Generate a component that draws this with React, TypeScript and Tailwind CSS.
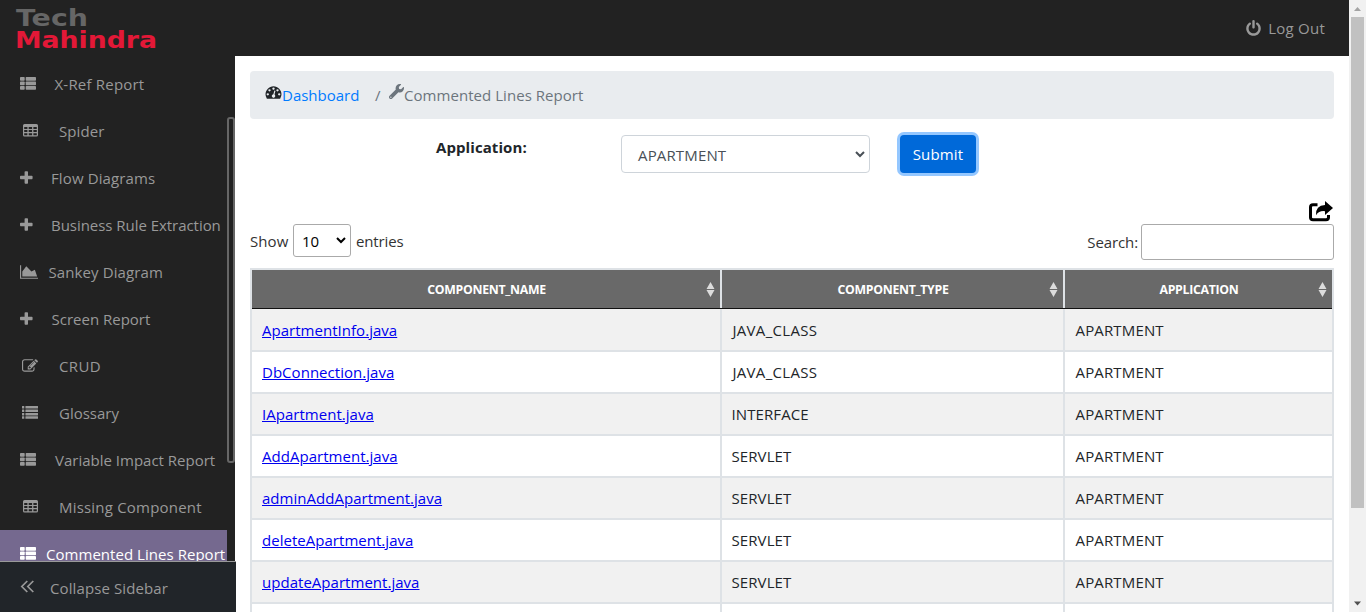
import type { ReactNode } from 'react';
import { FaWrench } from 'react-icons/fa';

type IconName = 'thlist' | 'table' | 'plus' | 'area' | 'edit' | 'list';

const svgProps = { fill: 'currentColor', height: 16, className: 'block shrink-0' };

function Icon({ name }: { name: IconName }) {
  switch (name) {
    case 'thlist':
      return (
        <svg {...svgProps} width={16} viewBox="0 0 16 16">
          {[1, 5.5, 10].map((y) => (
            <g key={y}>
              <rect x="0" y={y} width="4.700" height="3.800" rx="0.700" />
              <rect x="5.700" y={y} width="10.300" height="3.800" rx="0.700" />
            </g>
          ))}
        </svg>
      );
    case 'table':
      return (
        <svg {...svgProps} width={15} viewBox="0 0 15 16">
          <path
            fillRule="evenodd"
            d="M1.500 1h12q1.500 0 1.500 1.500v9.500q0 1.500-1.500 1.500h-12q-1.500 0-1.500-1.500V2.500Q0 1 1.500 1zM1.200 4v2h3.200V4zM5.700 4v2h3.400V4zM10.400 4v2h3.400V4zM1.200 7.100v2h3.200v-2zM5.700 7.100v2h3.400v-2zM10.400 7.100v2h3.400v-2zM1.200 10.300v2h3.200v-2zM5.700 10.300v2h3.400v-2zM10.400 10.300v2h3.400v-2z"
          />
        </svg>
      );
    case 'plus':
      return (
        <svg {...svgProps} width={12.6} viewBox="192 0 1408 1792">
          <path d="M1600 736v192q0 40-28 68t-68 28h-416v416q0 40-28 68t-68 28h-192q-40 0-68-28t-28-68v-416h-416q-40 0-68-28t-28-68v-192q0-40 28-68t68-28h416v-416q0-40 28-68t68-28h192q40 0 68 28t28 68v416h416q40 0 68 28t28 68z" />
        </svg>
      );
    case 'area':
      return (
        <svg {...svgProps} width={18.3} viewBox="0 0 2048 1792">
          <path d="M2048 1536v128H0V128h128v1408h1920zM1664 640l256 768H256V832l448-576 576 576z" />
        </svg>
      );
    case 'edit':
      return (
        <svg {...svgProps} width={16} viewBox="0 0 1792 1792">
          <path d="M888 1184l116-116-152-152-116 116v56h96v96h56zm440-720q-16-16-33 1l-350 350q-17 17-1 33t33-1l350-350q17-17 1-33zm80 594v190q0 119-84.500 203.500t-203.500 84.500h-832q-119 0-203.500-84.500t-84.500-203.500v-832q0-119 84.500-203.500t203.500-84.500h832q63 0 117 25 15 7 18 23 3 17-9 29l-49 49q-14 14-32 8-23-6-45-6h-832q-66 0-113 47t-47 113v832q0 66 47 113t113 47h832q66 0 113-47t47-113v-126q0-13 9-22l64-64q15-15 35-7t20 29zm-96-738l288 288-672 672h-288v-288zm444 132l-92 92-288-288 92-92q28-28 68-28t68 28l152 152q28 28 28 68t-28 68z" />
        </svg>
      );
    case 'list':
      return (
        <svg {...svgProps} width={16} viewBox="0 0 16 16">
          {[1, 4.5, 7.900, 11.300].map((y) => (
            <g key={y}>
              <rect x="0" y={y} width="2.300" height="2.500" rx="0.300" />
              <rect x="3.400" y={y} width="12.600" height="2.500" rx="0.300" />
            </g>
          ))}
        </svg>
      );
  }
}

const menu: { label: string; icon: IconName; pad: string; text: string; track: string }[] = [
  { label: 'X-Ref Report', icon: 'thlist', pad: 'pl-5', text: 'w-[34.5px]', track: 'tracking-[0.2px]' },
  { label: 'Spider', icon: 'table', pad: 'pl-[22.5px]', text: 'w-[36.5px]', track: 'tracking-[0.1px]' },
  { label: 'Flow Diagrams', icon: 'plus', pad: 'pl-5', text: 'w-[31px]', track: 'tracking-[0.12px]' },
  { label: 'Business Rule Extraction', icon: 'plus', pad: 'pl-5', text: 'w-[31px]', track: 'tracking-[-0.04px]' },
  { label: 'Sankey Diagram', icon: 'area', pad: 'pl-5', text: 'w-[28.5px]', track: 'tracking-[0.1px]' },
  { label: 'Screen Report', icon: 'plus', pad: 'pl-5', text: 'w-[31.500px]', track: 'tracking-normal' },
  { label: 'CRUD', icon: 'edit', pad: 'pl-[22px]', text: 'w-[37px]', track: 'tracking-[0.4px]' },
  { label: 'Glossary', icon: 'list', pad: 'pl-[22px]', text: 'w-[37px]', track: 'tracking-normal' },
  { label: 'Variable Impact Report', icon: 'thlist', pad: 'pl-5', text: 'w-[35px]', track: 'tracking-normal' },
  { label: 'Missing Component', icon: 'table', pad: 'pl-[22.5px]', text: 'w-[36.5px]', track: 'tracking-[0.2px]' },
];

const rows = [
  ['ApartmentInfo.java', 'JAVA_CLASS', 'APARTMENT'],
  ['DbConnection.java', 'JAVA_CLASS', 'APARTMENT'],
  ['IApartment.java', 'INTERFACE', 'APARTMENT'],
  ['AddApartment.java', 'SERVLET', 'APARTMENT'],
  ['adminAddApartment.java', 'SERVLET', 'APARTMENT'],
  ['deleteApartment.java', 'SERVLET', 'APARTMENT'],
  ['updateApartment.java', 'SERVLET', 'APARTMENT'],
];

function Header({ children }: { children: ReactNode }) {
  return (
    <div className="relative flex h-[38px] items-center justify-center pl-[1px] pt-[2px] text-[12.3px] font-bold tracking-[-0.3px] text-white">
      {children}
      <svg className="absolute right-[5px] top-[12px]" width="9" height="15" viewBox="0 0 9 15" fill="#dcdcdc">
        <path d="M4.500 0L8.500 7H.5zM.5 8h8l-4 7z" />
      </svg>
    </div>
  );
}

function Chevron({ color }: { color: string }) {
  return (
    <svg width="10" height="7" viewBox="0 0 10 7" fill="none" stroke={color} strokeWidth="2">
      <path d="M1 1l4 4 4-4" />
    </svg>
  );
}

export default function App() {
  return (
    <div className="flex h-[612px] w-[1366px] overflow-hidden bg-white font-['Open_Sans','Noto_Sans',sans-serif] text-[15px] leading-6 text-[#212529]">
      <div className="flex w-[1349px] flex-col">
        <header className="flex h-14 shrink-0 justify-between bg-[#222] text-[#999]">
          <svg width="170" height="56" viewBox="0 0 170 56" className="font-['DejaVu_Sans',sans-serif] text-[23.5px] font-bold">
            <text x="16" y="26" fill="#666" textLength="72" lengthAdjust="spacingAndGlyphs">Tech</text>
            <text x="15" y="48" fill="#e31837" textLength="142" lengthAdjust="spacingAndGlyphs">Mahindra</text>
          </svg>
          <div className="flex items-center gap-[6px] pr-6">
            <svg width="17" height="17" viewBox="0 0 1792 1792" fill="currentColor">
              <path d="M1664 896q0 156-61 298t-164 245-245 164-298 61-298-61-245-164-164-245-61-298q0-182 80.500-343t226.500-270q43-32 95.500-25t83.500 50q32 42 24.500 94.500t-49.500 84.500q-98 74-151.500 181t-53.500 228q0 104 40.500 198.500t109.500 163.500 163.500 109.500 198.500 40.500 198.500-40.500 163.500-109.500 109.500-163.500 40.500-198.500q0-121-53.500-228t-151.500-181q-42-32-49.500-84.500t24.500-94.500q31-43 84-50t95 25q146 109 226.500 270t80.500 343zm-640-768v640q0 52-38 90t-90 38-90-38-38-90v-640q0-52 38-90t90-38 90 38 38 90z" />
            </svg>
            <span className="tracking-[0.25px]">Log Out</span>
          </div>
        </header>

        <div className="flex h-[556px]">
          <aside className="flex w-[235px] shrink-0 flex-col bg-[#222] text-[#999]">
            <div className="flex h-[505px]">
              <nav className="flex w-[227px] flex-col overflow-hidden whitespace-nowrap pt-1">
                {menu.map((m) => (
                  <div key={m.label} className="flex h-[47px] shrink-0 items-center">
                    <div className={m.pad}>
                      <div className={m.text}>
                        <Icon name={m.icon} />
                      </div>
                    </div>
                    <span className={m.track}>{m.label}</span>
                  </div>
                ))}
                <div className="flex h-[47px] shrink-0 items-center bg-[#75698f] pl-5 text-white">
                  <div className="w-[26px]">
                    <Icon name="thlist" />
                  </div>
                  <span className="tracking-[0.04px]">Commented Lines Report</span>
                </div>
              </nav>
              <div className="w-2 pt-[61px]">
                <div className="h-[346px] w-2 rounded-[3px] border-2 border-[#666] bg-[#222]" />
              </div>
            </div>
            <div className="flex h-[51px] w-[236px] items-center border-t border-[#999] bg-[#212529] pl-5 pt-px">
              <svg width="30" height="16" viewBox="0 0 30 16" fill="none" stroke="currentColor" strokeWidth="1.7">
                <path d="M7.300 1L1.800 6.500l5.500 5.500M13.300 1L7.800 6.500l5.500 5.500" />
              </svg>
              <span className="tracking-[0.1px]">Collapse Sidebar</span>
            </div>
          </aside>

          <main className="flex w-[1114px] flex-col px-[15px] pt-[15px]">
            <div className="flex h-12 shrink-0 items-center rounded bg-[#e9ecef] pl-[15px]">
              <svg width="17" height="16" viewBox="0 0 1792 1792" fill="currentColor" className="mb-[7px]">
                <path d="M384 1152q0-53-37.500-90.500t-90.500-37.500-90.500 37.500-37.500 90.500 37.500 90.500 90.500 37.500 90.500-37.500 37.500-90.500zm192-448q0-53-37.500-90.500t-90.500-37.500-90.500 37.500-37.500 90.500 37.500 90.500 90.500 37.500 90.500-37.500 37.500-90.500zm428 481l101-382q6-26-7.500-48.500t-38.500-29.500-48 6.500-30 39.500l-101 382q-60 5-107 43.500t-63 98.500q-20 77 20 146t117 89 146-20 89-117q16-60-6-117t-72-91zm660-33q0-53-37.500-90.500t-90.500-37.500-90.500 37.500-37.500 90.500 37.500 90.500 90.500 37.500 90.500-37.500 37.500-90.500zm-640-640q0-53-37.500-90.500t-90.500-37.500-90.500 37.500-37.500 90.500 37.500 90.500 90.500 37.500 90.500-37.500 37.500-90.500zm448 192q0-53-37.500-90.500t-90.500-37.500-90.500 37.500-37.500 90.500 37.500 90.500 90.500 37.500 90.500-37.500 37.500-90.500zm320 448q0 261-141 483-19 29-54 29h-1402q-35 0-54-29-141-221-141-483 0-182 71-348t191-286 286-191 348-71 348 71 286 191 191 286 71 348z" />
              </svg>
              <a className="w-[93px] text-[#007bff]">Dashboard</a>
              <span className="w-[14px] text-[#6c757d]">/</span>
              <FaWrench className="mb-2 h-[15px] w-[15px] text-[#6c757d]" />
              <span className="tracking-[0.05px] text-[#6c757d]">Commented Lines Report</span>
            </div>

            <div className="flex h-[80px] shrink-0 pt-4">
              <div className="w-[371px] pl-[186px] font-bold tracking-[0.08px]">Application:</div>
              <div className="flex h-[38px] w-[249px] items-center justify-between rounded border border-[#ced4da] pl-4 pr-[4px] text-[#495057]">
                <span className="pt-px tracking-[0.15px]">APARTMENT</span>
                <Chevron color="#495057" />
              </div>
              <button className="ml-[30px] flex h-[38px] w-[76px] items-center justify-center rounded bg-[#0069d9] tracking-[0.15px] text-white shadow-[0_0_0_3px_#94c7ff]">
                Submit
              </button>
            </div>

            <div className="flex h-[25px] shrink-0 items-end justify-end">
              <svg width="26" height="23" viewBox="0 0 26 23">
                <path d="M9.500 3.700H5Q2.500 3.700 2.500 6V16.500Q2.500 18.700 5 18.700H18Q20.500 18.700 20.500 16.500V14" fill="none" stroke="#000" strokeWidth="3" />
                <path d="M17 0l8 7-8 7v-3.800q-6-.7-9 4Q7.500 4.200 17 4z" />
              </svg>
            </div>
            <div className="flex h-11 shrink-0 items-start justify-between text-[#333]">
              <div className="flex h-[33px] items-center">
                <span className="w-[43px] tracking-[0.1px]">Show</span>
                <div className="flex h-[33px] w-[58px] items-center justify-between rounded-[3px] border border-[#aaa] bg-white pl-2 pr-1 text-black">
                  <span>10</span>
                  <Chevron color="#000" />
                </div>
                <span className="pl-[5px] tracking-[-0.15px]">entries</span>
              </div>
              <label className="flex h-9 items-center gap-[3px]">
                <span className="tracking-[-0.1px]">Search:</span>
                <input className="h-9 w-[193px] rounded-[3px] border border-[#aaa] bg-white" />
              </label>
            </div>

            <div className="w-[1084px] shrink-0 border-2 border-b-0 border-[#dee2e6]">
              <div className="grid grid-cols-[468px_341px_267px] gap-x-[2px] border-b border-[#111] bg-[#dee2e6]">
                {['COMPONENT_NAME', 'COMPONENT_TYPE', 'APPLICATION'].map((h) => (
                  <div key={h} className="bg-[#696969]">
                    <Header>{h}</Header>
                  </div>
                ))}
              </div>
              {rows.map((r, i) => (
                <div
                  key={r[0]}
                  className={`grid grid-cols-[470px_343px_267px] border-b-2 border-[#dee2e6] ${i === 0 ? 'h-[43px]' : 'h-[42px]'} ${i % 2 === 0 ? 'bg-[#f1f1f1]' : 'bg-white'}`}
                >
                  <div className="flex items-center border-r-2 border-[#dee2e6] pl-[10px]">
                    <a className="tracking-[0.03px] text-[#0000ee] underline">{r[0]}</a>
                  </div>
                  <div
                    className={`flex items-center border-r-2 border-[#dee2e6] ${r[1] === 'JAVA_CLASS' ? 'pl-[10.5px] tracking-[0.3px]' : 'pl-[9.5px] tracking-[0.1px]'}`}
                  >
                    {r[1]}
                  </div>
                  <div className="flex items-center pl-[10.5px] tracking-[0.15px]">{r[2]}</div>
                </div>
              ))}
              <div className="grid h-[42px] grid-cols-[470px_343px_267px] bg-white">
                <div className="border-r-2 border-[#dee2e6]" />
                <div className="border-r-2 border-[#dee2e6]" />
              </div>
            </div>
          </main>
        </div>
      </div>

      <div className="flex w-[17px] flex-col items-center justify-between bg-[#f1f1f1]">
        <svg width="17" height="17" viewBox="0 0 17 17" fill="#a3a3a3"><path d="M5 11h7L8.500 7z" /></svg>
        <div className="h-[491px] w-[13px] bg-[#c1c1c1]" />
        <div className="flex h-[104px] items-end">
          <svg width="17" height="17" viewBox="0 0 17 17" fill="#505050"><path d="M5 6.500h7l-3.500 4z" /></svg>
        </div>
      </div>
    </div>
  );
}
